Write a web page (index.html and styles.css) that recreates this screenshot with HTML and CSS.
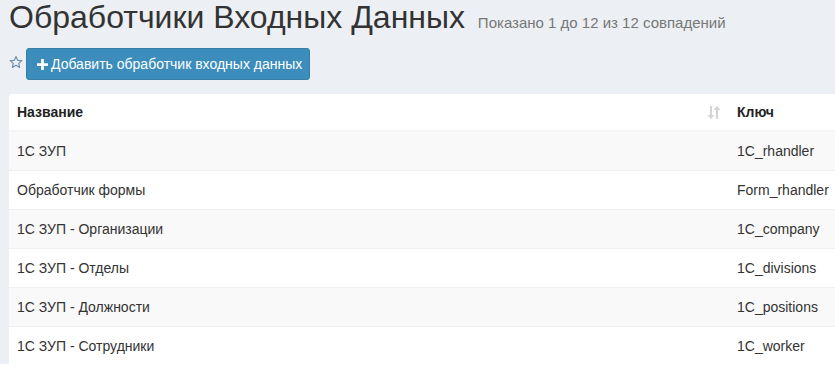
FILE: index.html
```html
<!DOCTYPE html>
<html>
<head>
    <meta charset="utf-8">
    <title>Обработчики Входных Данных</title>
    <link rel="stylesheet" href="styles.css">
</head>
<body>
    <div class="content">
        <div class="content-header">
            <h1>Обработчики Входных Данных <small>Показано 1 до 12 из 12 совпадений</small></h1>
        </div>

        <div class="toolbar">
            <svg class="fav" width="14" height="14" viewBox="0 0 24 24">
                <path d="M12 2.5l2.9 6.6 7.1.6-5.4 4.7 1.6 7-6.2-3.7-6.2 3.7 1.6-7L2 9.7l7.1-.6z" fill="none" stroke="#6f8fb3" stroke-width="2" stroke-linejoin="round"/>
            </svg>
            <button class="btn-add">
                <svg width="11" height="11" viewBox="0 0 12 12"><path d="M4.5 0h3v4.5H12v3H7.5V12h-3V7.5H0v-3h4.5z" fill="#fff"/></svg>
                Добавить обработчик входных данных
            </button>
        </div>

        <div class="box">
            <table class="grid">
                <colgroup>
                    <col class="w-name">
                    <col class="w-key">
                </colgroup>
                <thead>
                    <tr>
                        <th class="col-name">Название
                            <svg class="sort" width="14" height="13" viewBox="0 0 14 13">
                                <path d="M3 0h2v9h2.5L4 13 0.5 9H3z" fill="#d4d4d4"/>
                                <path d="M9 13h2V4h2.5L10 0 6.5 4H9z" fill="#d4d4d4"/>
                            </svg>
                        </th>
                        <th>Ключ</th>
                    </tr>
                </thead>
                <tbody>
                    <tr><td>1С ЗУП</td><td>1C_rhandler</td></tr>
                    <tr><td>Обработчик формы</td><td>Form_rhandler</td></tr>
                    <tr><td>1С ЗУП - Организации</td><td>1C_company</td></tr>
                    <tr><td>1С ЗУП - Отделы</td><td>1C_divisions</td></tr>
                    <tr><td>1С ЗУП - Должности</td><td>1C_positions</td></tr>
                    <tr><td>1С ЗУП - Сотрудники</td><td>1C_worker</td></tr>
                </tbody>
            </table>
        </div>
    </div>
</body>
</html>
```

FILE: styles.css
```css
body {
    margin: 0;
    background-color: #ffffff;
    font-family: 'Liberation Sans', Arial, sans-serif;
    color: #333;
    overflow: hidden;
}

.content {
    background-color: #ecf0f5;
    padding: 0 0 0 9px;
    height: 364px;
    overflow: hidden;
}

.content-header h1 {
    margin: 0;
    font-size: 32px;
    line-height: 35px;
    font-weight: normal;
    color: #333;
}

.content-header small {
    font-size: 15px;
    line-height: 1;
    color: #777;
    margin-left: 4px;
}

.toolbar {
    display: flex;
    align-items: center;
    gap: 3px;
    margin-top: 13px;
    height: 32px;
}

.fav {
    margin-top: -4px;
}

.btn-add {
    display: flex;
    align-items: center;
    gap: 3px;
    height: 32px;
    padding: 0 7px 0 10px;
    background-color: #3c8dbc;
    border: 1px solid #367fa9;
    border-radius: 3px;
    color: #fff;
    font-family: inherit;
    font-size: 14px;
}

.box {
    margin-top: 14px;
    width: 846px;
    background-color: #fff;
    border-radius: 3px 0 0 0;
}

.grid {
    width: 846px;
    table-layout: fixed;
    border-collapse: collapse;
    font-size: 14px;
}

.w-name {
    width: 720px;
}

.w-key {
    width: 126px;
}

.grid th {
    text-align: left;
    font-weight: bold;
    color: #222;
    height: 36px;
    padding: 0 8px;
    border-bottom: 2px solid #f4f4f4;
}

.grid .col-name {
    position: relative;
}

.sort {
    position: absolute;
    right: 8px;
    top: 12px;
}

.grid td {
    height: 38px;
    padding: 0 8px;
    border-top: 1px solid #f0f0f0;
    color: #333;
    white-space: nowrap;
}

.grid tbody tr:nth-child(odd) td {
    background-color: #f9f9f9;
}
```
